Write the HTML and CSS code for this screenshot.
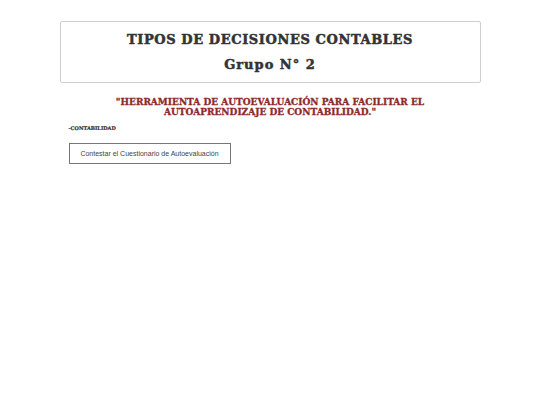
FILE: index.html
```html
<!DOCTYPE html>
<html lang="es">
<head>
<meta charset="utf-8">
<link rel="stylesheet" href="styles.css">
</head>
<body>
<div class="page">
  <header class="card">
    <h1 class="title">TIPOS DE DECISIONES CONTABLES</h1>
    <h2 class="subtitle">Grupo N° 2</h2>
  </header>
  <p class="quote">"HERRAMIENTA DE AUTOEVALUACIÓN PARA FACILITAR EL<br>AUTOAPRENDIZAJE DE CONTABILIDAD."</p>
  <p class="tag">-CONTABILIDAD</p>
  <button class="btn" type="button">Contestar el Cuestionario de Autoevaluación</button>
</div>
</body>
</html>
```
FILE: styles.css
```css
html, body {
  margin: 0;
  padding: 0;
  background: #fff;
}
.page {
  width: 421px;
  margin: 0 auto;
  padding-top: 21px;
  font-family: "DejaVu Serif", serif;
}
.card {
  border: 1px solid #cfcfcf;
  border-radius: 2px;
  height: 60px;
  display: flex;
  flex-direction: column;
  align-items: center;
  justify-content: center;
  gap: 9px;
}
.title, .subtitle {
  margin: 0;
  font-size: 13px;
  font-weight: 900;
  color: #333;
  line-height: 16px;
  letter-spacing: 0.6px;
  -webkit-text-stroke: 0.5px #333;
}
.subtitle {
  letter-spacing: 1px;
}
.quote {
  margin: 14px 0 0 0;
  text-align: center;
  color: #8c2a2a;
  font-size: 9px;
  font-weight: bold;
  line-height: 10px;
  letter-spacing: 0;
  -webkit-text-stroke: 0.3px #8c2a2a;
}
.tag {
  margin: 8px 0 0 9px;
  font-size: 5px;
  font-weight: bold;
  color: #333;
  line-height: 6px;
  -webkit-text-stroke: 0.2px #333;
}
.btn {
  display: block;
  margin: 12px 0 0 9px;
  width: 162px;
  height: 21px;
  padding: 0;
  background: #fff;
  border: 1px solid #777;
  border-radius: 0;
  font-family: "Liberation Sans", Arial, sans-serif;
  font-size: 7px;
  color: #444;
}
```
